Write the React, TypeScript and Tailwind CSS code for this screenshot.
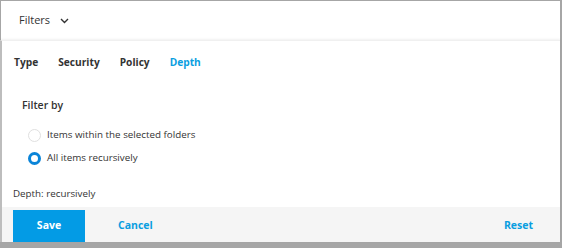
import React from "react";

export default function App() {
  const font = { fontFamily: '"Open Sans", "Noto Sans", sans-serif' };
  return (
    <div className="w-[562px] h-[248px] bg-white overflow-hidden" style={font}>
      <div className="h-[248px] flex flex-col border-t border-l border-r-2 border-b-[6px] border-[#a6a6a6]">
        <div className="h-[39px] flex items-center pl-[18px] gap-[10px] text-[11px] text-[#333]">
          <span>Filters</span>
          <svg width="9" height="6" viewBox="0 0 9 6" className="mt-[1px]">
            <path d="M1 1l3.5 3.5L8 1" fill="none" stroke="#333" strokeWidth="1.4" />
          </svg>
        </div>
        <div className="flex-1 flex flex-col border-l-2 border-[#bdbdbd] -ml-px shadow-[0_-1px_2px_rgba(0,0,0,0.06)] border-t border-t-[#f0f0f0]">
          <div className="flex gap-[20px] pl-[12px] pt-[14px] text-[10.2px] font-bold text-[#333]">
            <span>Type</span>
            <span>Security</span>
            <span>Policy</span>
            <span className="text-[#0a9ee0]">Depth</span>
          </div>
          <div className="pl-[20px] pt-[28px] text-[10.5px] text-[#333] font-semibold">Filter by</div>
          <div className="pl-[26px] pt-[14px] flex flex-col gap-[8px] text-[9.8px] text-[#333]">
            <div className="flex items-center gap-[6px]">
              <span className="w-[13px] h-[13px] rounded-full border border-[#e0e0e0] bg-white" />
              <span>Items within the selected folders</span>
            </div>
            <div className="flex items-center gap-[6px]">
              <span className="w-[13px] h-[13px] rounded-full border-[3px] border-[#0a84d8] bg-white" />
              <span>All items recursively</span>
            </div>
          </div>
          <div className="pl-[11px] pt-[22px] text-[9.8px] text-[#333]">Depth: recursively</div>
          <div className="mt-auto h-[35px] bg-[#f5f5f5] flex items-stretch pl-[11px] pt-[3px]">
            <button className="w-[72px] bg-[#039be5] text-white text-[10.5px] font-bold">Save</button>
            <button className="ml-[33px] text-[#0a9ee0] text-[10.5px] font-bold">Cancel</button>
            <button className="ml-auto mr-[27px] text-[#0a9ee0] text-[10.5px] font-bold">Reset</button>
          </div>
        </div>
      </div>
    </div>
  );
}
